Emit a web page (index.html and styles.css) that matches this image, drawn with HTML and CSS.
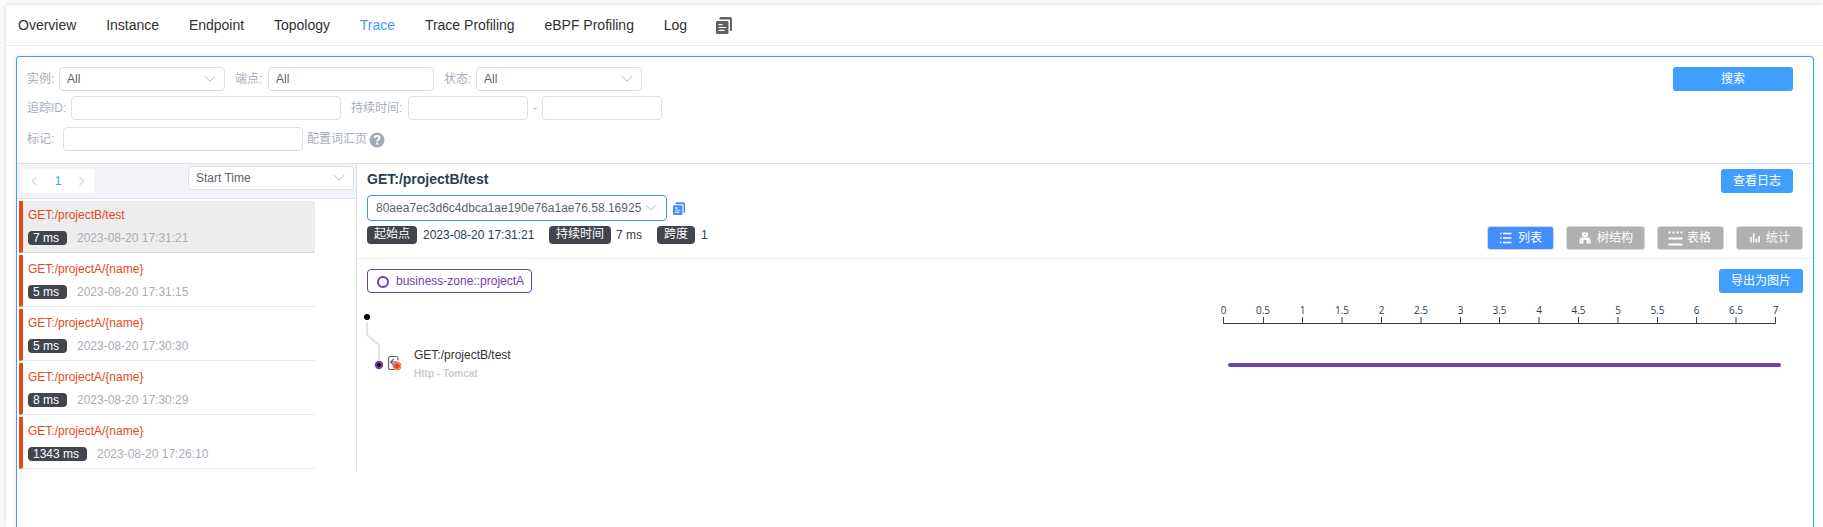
FILE: index.html
```html
<!DOCTYPE html>
<html lang="zh">
<head>
<meta charset="utf-8">
<title>Trace</title>
<link rel="stylesheet" href="styles.css">
</head>
<body>
<svg class="defs" width="0" height="0">
  <symbol id="chevron" viewBox="0 0 12 12"><path d="M1 3.200 6 8.200 11 3.200" fill="none" stroke="currentColor"/></symbol>
  <symbol id="copy" viewBox="0 0 16 18"><path d="M4.500 0H14a2 2 0 0 1 2 2v11a1 1 0 0 1-1 1h-1V2.500H3.500V1a1 1 0 0 1 1-1z" fill="currentColor"/><path fill-rule="evenodd" d="M1.500 4H11a1.500 1.500 0 0 1 1.500 1.500v10A1.500 1.500 0 0 1 11 17H1.500A1.500 1.500 0 0 1 0 15.500v-10A1.500 1.500 0 0 1 1.500 4zM2.500 7v1.200h4V7zM2.500 9.900v1.200H10V9.900zM2.500 12.800V14h6v-1.200z" fill="currentColor"/></symbol>
</svg>
<main class="card">
  <nav class="tabs">
    <a class="tab">Overview</a><a class="tab">Instance</a><a class="tab">Endpoint</a><a class="tab">Topology</a><a class="tab active">Trace</a><a class="tab">Trace Profiling</a><a class="tab">eBPF Profiling</a><a class="tab">Log</a>
    <svg class="tab-copy"><use href="#copy"/></svg>
  </nav>
  <section class="panel">
    <div class="filters">
      <div class="row">
        <label class="l-32">实例:</label><div class="box w166">All<svg class="chev"><use href="#chevron"/></svg></div>
        <label class="l-33 gap">端点:</label><div class="box w166">All</div>
        <label class="l-32 gap">状态:</label><div class="box w166">All<svg class="chev"><use href="#chevron"/></svg></div>
        <button class="btn search">搜索</button>
      </div>
      <div class="row second">
        <label class="l-44">追踪ID:</label><div class="box w270"></div>
        <label class="l-57 gap">持续时间:</label><div class="box w120"></div>
        <span class="dash">-</span><div class="box w120"></div>
      </div>
      <div class="row third">
        <label class="l-36">标记:</label><div class="box w240"></div>
        <span class="vocab">配置词汇页</span>
        <svg class="help" viewBox="0 0 16 16"><circle cx="8" cy="8" r="7.500" fill="#a3a9b6"/><path d="M5.600 6.300C5.600 4.800 6.600 4 8 4s2.500.8 2.500 2.100C10.500 7.700 8.100 7.700 8.100 9.600" fill="none" stroke="#fff" stroke-width="1.800"/><rect x="7.100" y="10.700" width="2" height="1.900" fill="#fff"/></svg>
      </div>
    </div>
    <div class="content">
      <aside class="list">
        <div class="list-head">
          <div class="pager"><svg class="arrow" viewBox="0 0 8 12"><path d="M6.500 2 2 6l4.500 4" /></svg><b>1</b><svg class="arrow" viewBox="0 0 8 12"><path d="M1.500 2 6 6l-4.500 4"/></svg></div>
          <div class="box w166">Start Time<svg class="chev"><use href="#chevron"/></svg></div>
        </div>
        <div class="traces">
          <div class="trace selected"><div class="name">GET:/projectB/test</div><div class="meta"><span class="ms">7 ms</span>2023-08-20 17:31:21</div></div>
          <div class="trace"><div class="name">GET:/projectA/{name}</div><div class="meta"><span class="ms">5 ms</span>2023-08-20 17:31:15</div></div>
          <div class="trace"><div class="name">GET:/projectA/{name}</div><div class="meta"><span class="ms">5 ms</span>2023-08-20 17:30:30</div></div>
          <div class="trace"><div class="name">GET:/projectA/{name}</div><div class="meta"><span class="ms">8 ms</span>2023-08-20 17:30:29</div></div>
          <div class="trace"><div class="name">GET:/projectA/{name}</div><div class="meta"><span class="ms wide">1343 ms</span>2023-08-20 17:26:10</div></div>
        </div>
      </aside>
      <section class="detail">
        <header class="detail-head">
          <div class="summary">
            <h1>GET:/projectB/test</h1>
            <div class="id-row"><div class="id-box"><span class="id-text">80aea7ec3d6c4dbca1ae190e76a1ae76.58.16925</span><svg class="chev"><use href="#chevron"/></svg></div><svg class="id-copy"><use href="#copy"/></svg></div>
            <div class="facts"><span class="tag t50">起始点</span><span class="fact f1">2023-08-20 17:31:21</span><span class="tag t62">持续时间</span><span class="fact f2">7 ms</span><span class="tag t38">跨度</span><span class="fact">1</span></div>
          </div>
          <div class="actions">
            <button class="btn log">查看日志</button>
            <div class="views">
              <span class="view on"><svg width="12" height="12" viewBox="0 0 12 12"><path d="M0 1.500h1.500M3 1.500h8.500M0 6h1.500M3 6h8.500M0 10.500h1.500M3 10.500h8.500" stroke="#fff" stroke-width="1.400"/></svg>列表</span>
              <span class="view tree"><svg width="12" height="12" viewBox="0 0 12 12"><path d="M3 .5h6v4H3zM5.300 4h1.400v2H5.300zM1.500 5.500h9V8h-9zM.5 7h4v4.500h-4zM7.500 7h4v4.500h-4z" fill="#fff"/><path d="M5 2.500h2M2 9.200h1M9 9.200h1" stroke="#b0b0b0"/></svg>树结构</span>
              <span class="view table"><svg width="15" height="15" viewBox="0 0 15 15"><path d="M.5 1.500h2M4.500 1.500h2M8.500 1.500h2M12.500 1.500h2" stroke="#fff" stroke-width="1.800"/><path d="M.5 7.500h14M.5 13.500h14" stroke="#fff" stroke-width="2"/></svg>表格</span>
              <span class="view stat"><svg width="10" height="10" viewBox="0 0 10 10"><path d="M1 9.500V4M3.700 9.500V.5M6.400 9.500V5.500M9 9.500V3" stroke="#fff" stroke-width="1.600"/></svg>统计</span>
            </div>
          </div>
        </header>
        <div class="legend">
          <span class="zone"><i class="ring"></i>business-zone::projectA</span>
          <button class="btn export">导出为图片</button>
        </div>
        <svg class="chart" viewBox="357 293 1456 178" width="1456" height="178">
          <circle cx="367" cy="317" r="3"/>
          <path d="M367 322v13l12 10v15" fill="none" stroke="#e3e3e3" stroke-width="2"/>
          <circle cx="379" cy="365" r="4.200" fill="#6c3fa8"/><circle cx="379" cy="365" r="2"/>
          <path d="M398 360.500V358.500q0-2-2-2h-5.500q-2 0-2 2v9q0 2 2 2h4M397 362h-6.500M394 359l-3.500 3 3.500 3.500" fill="none" stroke="#666" stroke-width="1.200"/>
          <circle cx="397" cy="366" r="3" fill="#e64a19"/><circle cx="397" cy="366" r="4" fill="none" stroke="#e66a45" stroke-width="1"/>
          <text class="span-name" x="414" y="359">GET:/projectB/test</text>
          <text class="span-kind" x="414" y="377">Http - Tomcat</text>
          <path class="axis" d="M1223.500 317v6.500h552V317M1263.500 317v6M1302.500 317v6M1342 317v6M1381.500 317v6M1421 317v6M1460.500 317v6M1499.500 317v6M1539 317v6M1578.500 317v6M1618 317v6M1657.500 317v6M1696.500 317v6M1736 317v6"/>
          <g class="ticks"><text x="1223.500" y="314">0</text><text x="1263" y="314">0.5</text><text x="1302.500" y="314">1</text><text x="1342" y="314">1.5</text><text x="1381.500" y="314">2</text><text x="1421" y="314">2.5</text><text x="1460.500" y="314">3</text><text x="1499.500" y="314">3.5</text><text x="1539" y="314">4</text><text x="1578.500" y="314">4.5</text><text x="1618" y="314">5</text><text x="1657.500" y="314">5.5</text><text x="1696.500" y="314">6</text><text x="1736" y="314">6.5</text><text x="1775.500" y="314">7</text></g>
          <rect x="1228" y="363" width="553" height="4" rx="2" fill="#7041a9"/>
        </svg>
      </section>
    </div>
  </section>
</main>
</body>
</html>
```
FILE: styles.css
```css
* { box-sizing: border-box; }
body {
  margin: 0;
  height: 527px;
  overflow: hidden;
  background: #f7f9fa;
  padding: 5px 0 0 6px;
  font: 12px/16px "Liberation Sans", "Noto Sans CJK SC", sans-serif;
  color: #2c3e50;
}
.defs { position: absolute; }
.card {
  height: 522px;
  background: #fff;
  border-radius: 4px 0 0 0;
  box-shadow: 0 0 5px rgba(0, 0, 0, .14);
}
.tabs {
  display: flex;
  align-items: center;
  height: 41px;
  padding: 0 0 1px 12px;
  border-bottom: 1px solid #ebebeb;
  font-size: 14px;
  color: #303133;
}
.tab { margin-right: 29.800px; }
.active { color: #409eff; }
.tab-copy { width: 16px; height: 18px; margin: 2px 0 0 -1px; color: #626062; }
.panel {
  height: 471px;
  margin: 10px 9px 0 10px;
  border: 1px solid #409eff;
  border-bottom: 0;
  border-radius: 4px 4px 0 0;
  box-shadow: 0 0 5px rgba(0, 0, 0, .1);
}
.filters {
  height: 107px;
  padding: 10px 20px 0 10px;
  border-bottom: 1px solid #dcdfe6;
  color: #a7aebb;
}
.row { display: flex; align-items: center; height: 24px; }
.second { margin-top: 5px; }
.third { margin-top: 7px; }
.row label { flex: none; white-space: nowrap; }
.l-32 { width: 32px; }
.l-33 { width: 33px; }
.l-36 { width: 36px; }
.l-44 { width: 44px; }
.l-57 { width: 57px; }
.gap { margin-left: 10px; }
.box {
  display: flex;
  align-items: center;
  height: 24px;
  padding: 0 8px 0 7px;
  border: 1px solid #dcdfe6;
  border-radius: 4px;
  background: #fff;
  color: #606266;
}
.w120 { width: 120px; }
.w166 { width: 166px; }
.w240 { width: 240px; }
.w270 { width: 270px; }
.chev { flex: none; width: 12px; height: 12px; margin-left: auto; color: #b4b9c2; }
.dash { width: 14px; padding-left: 5px; }
.vocab { margin-left: 4px; }
.help { width: 16px; height: 16px; margin: 2px 0 0 2px; }
.btn {
  height: 24px;
  border: 0;
  padding: 0;
  border-radius: 3px;
  background: #409eff;
  color: #fff;
  font: inherit;
}
.search { width: 120px; margin-left: auto; }
.content { display: flex; height: 307px; }
.list { flex: none; width: 340px; border-right: 1px solid #dcdfe6; }
.list-head {
  display: flex;
  justify-content: space-between;
  height: 35px;
  padding: 2px 2px 0 5px;
  background: #f2f4f9;
  border-bottom: 1px solid #e2e4ea;
}
.pager {
  display: flex;
  align-items: center;
  justify-content: space-between;
  width: 72px;
  height: 24px;
  margin-top: 3px;
  padding: 0 8px;
  background: #fff;
}
.pager b { font-weight: normal; color: #409eff; }
.arrow { width: 8px; height: 12px; fill: none; stroke: #bcc0c8; }
.traces { display: grid; gap: 2px; padding: 2px 0 0 2px; }
.trace {
  width: 296px;
  height: 52px;
  padding: 6px 0 0 5px;
  border-left: 4px solid #e64a19;
  border-bottom: 1px solid #e8e8e8;
}
.selected { background: #ededed; border-bottom-color: #d8d8d8; }
.name { color: #e64a19; }
.meta { display: flex; align-items: center; margin-top: 7px; color: #a7aebb; }
.ms {
  width: 39px;
  height: 14px;
  margin-right: 10px;
  padding-left: 5px;
  border-radius: 4px;
  background: #40454e;
  color: #fff;
  line-height: 14px;
}
.wide { width: 59px; }
.detail { flex: 1; min-width: 0; }
.detail-head {
  display: flex;
  justify-content: space-between;
  height: 95px;
  padding: 0 10px;
  border-bottom: 1px solid #eee;
}
.summary { padding-top: 7px; }
h1 { margin: 0; font-size: 14px; line-height: 16px; }
.id-row { display: flex; align-items: center; margin-top: 8px; }
.id-box {
  display: flex;
  align-items: center;
  width: 300px;
  height: 26px;
  padding: 0 9px 0 8px;
  border: 1px solid #448dfe;
  border-radius: 4px;
  color: #606266;
}
.id-text { white-space: nowrap; letter-spacing: .01px; }
.id-copy { width: 12px; height: 14px; margin: 1px 0 0 6px; color: #448dfe; }
.facts { display: flex; align-items: center; margin-top: 5px; }
.tag {
  height: 18px;
  margin-right: 6px;
  border-radius: 4px;
  background: #40454e;
  color: #fff;
  line-height: 17px;
  text-align: center;
}
.t50 { width: 50px; }
.t62 { width: 62px; margin-right: 5px; }
.t38 { width: 38px; }
.f1 { width: 126px; }
.f2 { width: 41px; }
.actions { display: flex; flex-direction: column; align-items: flex-end; padding-top: 5px; }
.log { width: 72px; margin-right: 10px; }
.views { display: flex; gap: 12px; margin-top: 33px; }
.view {
  display: flex;
  align-items: center;
  width: 67px;
  height: 24px;
  padding-left: 12px;
  gap: 6px;
  border: 1px solid #d4d7de;
  border-radius: 3px;
  background: #b0b0b0;
  color: #fff;
}
.on { background: #448dfe; }
.tree { width: 79px; }
.table { padding-left: 10px; gap: 4px; }
.stat { padding-left: 13px; }
.legend { display: flex; justify-content: space-between; padding: 10px 10px 0; }
.zone {
  display: flex;
  align-items: center;
  width: 165px;
  height: 24px;
  padding-left: 9px;
  border: 1px solid #6c3fa8;
  border-radius: 4px;
  color: #7041a9;
}
.ring { width: 12px; height: 12px; margin: 2px 7px 0 0; border: 2px solid #6c3fa8; border-radius: 50%; }
.export { width: 84px; }
.chart { display: block; }
.span-name { fill: #333; }
.span-kind { fill: #ccc; font-size: 10px; font-weight: bold; }
.axis { fill: none; stroke: #2c3e50; }
.ticks { fill: #2c3e50; font-family: "Open Sans", sans-serif; font-size: 10px; text-anchor: middle; }
```
